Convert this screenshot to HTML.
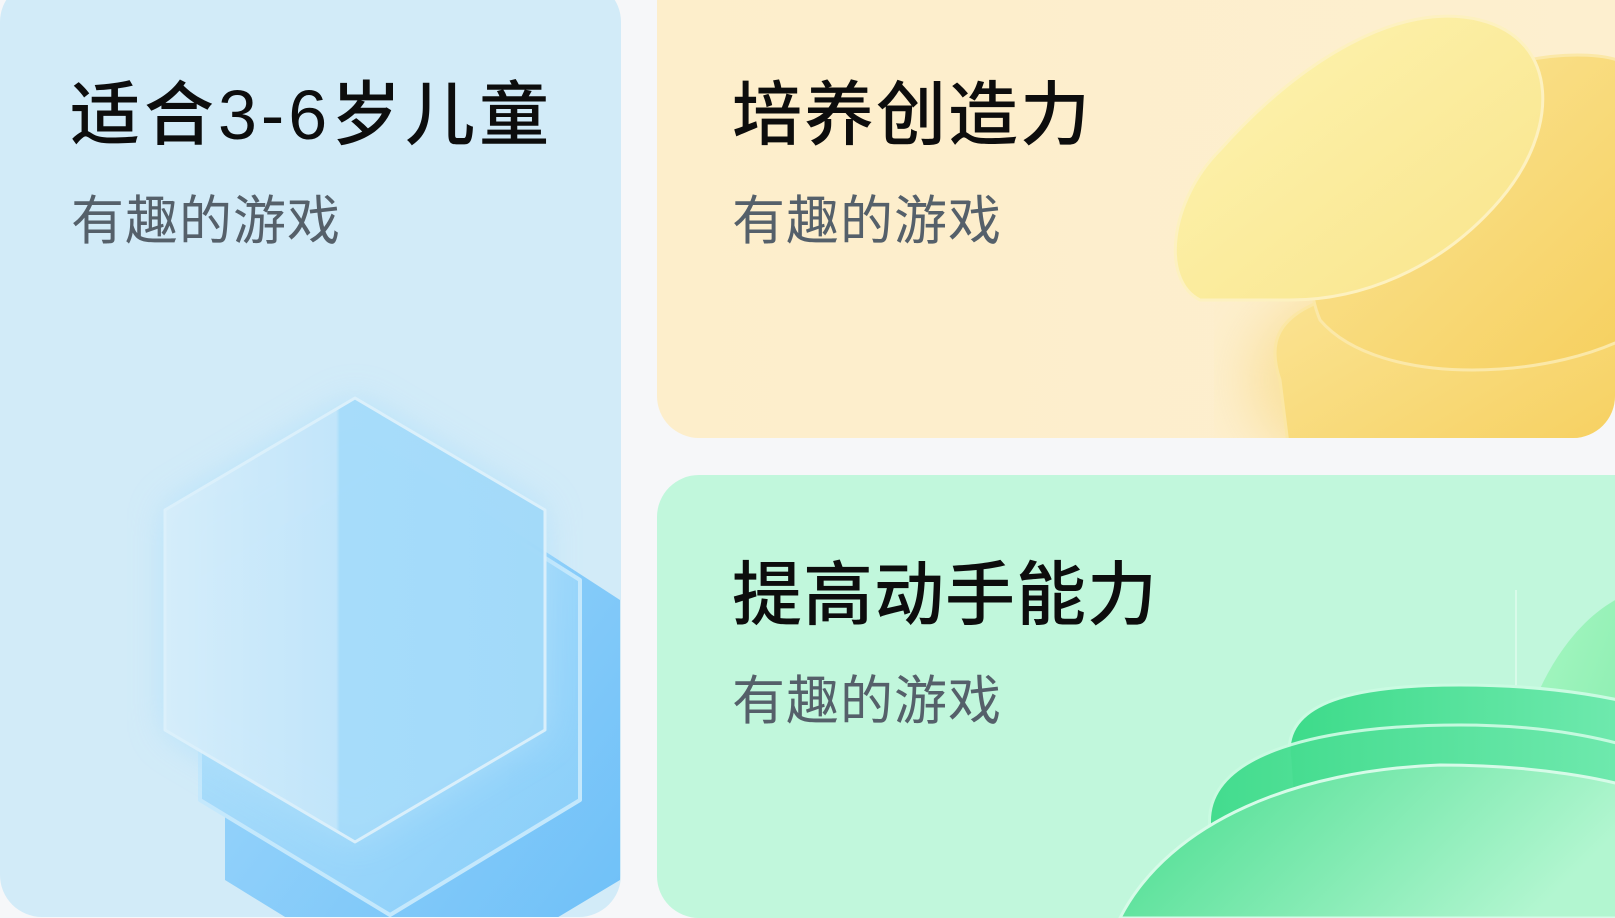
<!DOCTYPE html>
<html><head><meta charset="utf-8"><style>
html,body{margin:0;padding:0;overflow:hidden;width:1615px;height:918px;}
body{background:#f6f7f9;position:relative;font-family:"Liberation Sans","Noto Sans CJK SC",sans-serif;}
.card{position:absolute;border-radius:42px;overflow:hidden;}
.t{position:absolute;font-size:70px;font-weight:500;color:#0d0d0d;white-space:nowrap;line-height:1;letter-spacing:1px;}
.s{position:absolute;font-size:53px;color:#55606a;white-space:nowrap;line-height:1;letter-spacing:1px;}
svg{position:absolute;left:0;top:0;display:block;}
</style></head><body>
<div class="card" style="left:0;top:-20px;width:621px;height:937px;background:#d2ebf8;">
<svg width="621" height="937" viewBox="0 -20 621 937">
<defs>
<linearGradient id="hb" x1="0" y1="0" x2="1" y2="1"><stop offset="0" stop-color="#9fd8fb"/><stop offset="1" stop-color="#5fb9f8"/></linearGradient>
<linearGradient id="hm" x1="0" y1="0" x2="1" y2="1"><stop offset="0" stop-color="#b8e3fb"/><stop offset="1" stop-color="#86cdf9"/></linearGradient>
<linearGradient id="hf" x1="0" y1="0" x2="1" y2="0"><stop offset="0" stop-color="#d6eefb"/><stop offset="0.45" stop-color="#c3e6fb"/><stop offset="0.46" stop-color="#a6dcfb"/><stop offset="1" stop-color="#a2daf9"/></linearGradient>
<filter id="bl"><feGaussianBlur stdDeviation="18"/></filter>
</defs>
<path d="M420 470 L620 600 L620 880 L420 1000 L225 880 L225 600 Z" fill="url(#hb)" opacity="0.9"/>
<path d="M390 460 L580 580 L580 800 L390 915 L200 800 L200 580 Z" fill="url(#hm)" stroke="#c4e8fc" stroke-width="4" stroke-linejoin="round"/>
<path d="M355 398 L545 510 L545 730 L355 842 L165 730 L165 510 Z" fill="#b0e0fb" filter="url(#bl)" opacity="0.8"/>
<path d="M355 398 L545 510 L545 730 L355 842 L165 730 L165 510 Z" fill="url(#hf)" stroke="#ddf1fc" stroke-width="3" stroke-linejoin="round" opacity="0.95"/>
</svg>
</div>
<div class="t" style="left:70px;top:80px;letter-spacing:4px;">适合3-6岁儿童</div>
<div class="s" style="left:71px;top:195px;">有趣的游戏</div>

<div class="card" style="left:657px;top:-40px;width:958px;height:478px;background:linear-gradient(90deg,#fdeecb,#fdefcf);">
<svg width="958" height="478" viewBox="657 -40 958 478">
<defs>
<linearGradient id="y1" x1="0" y1="0" x2="1" y2="1"><stop offset="0" stop-color="#fbe69a"/><stop offset="1" stop-color="#f6cf5d"/></linearGradient>
<linearGradient id="y2" x1="0" y1="0" x2="1" y2="1"><stop offset="0" stop-color="#fdf4b2"/><stop offset="1" stop-color="#f9e48a"/></linearGradient>
<filter id="b2"><feGaussianBlur stdDeviation="30"/></filter>
</defs>
<ellipse cx="1430" cy="380" rx="180" ry="110" fill="#f7d77a" filter="url(#b2)" opacity="0.6"/>
<path d="M1280 380 C1260 320 1300 300 1400 280 L1640 240 L1640 460 L1290 460 Z" fill="url(#y1)" stroke="#fbe7a5" stroke-width="3"/>
<path d="M1320 320 C1290 250 1340 150 1440 90 C1540 40 1640 50 1640 80 L1640 330 C1560 380 1380 390 1320 320 Z" fill="url(#y1)" stroke="#fbe8a8" stroke-width="3"/>
<path d="M1200 300 C1160 280 1170 200 1220 150 C1300 60 1400 0 1480 20 C1560 40 1560 130 1500 200 C1440 270 1360 300 1290 300 Z" fill="url(#y2)" stroke="#fdf1c0" stroke-width="3"/>
</svg>
</div>
<div class="t" style="left:732px;top:80px;letter-spacing:2px;">培养创造力</div>
<div class="s" style="left:732px;top:195px;">有趣的游戏</div>

<div class="card" style="left:657px;top:475px;width:1000px;height:443px;background:#c1f7dc;">
<svg width="1000" height="443" viewBox="657 475 1000 443">
<defs>
<linearGradient id="g1" x1="0" y1="0" x2="1" y2="1"><stop offset="0" stop-color="#a9f8c4"/><stop offset="1" stop-color="#7fe9a8"/></linearGradient>
<linearGradient id="g2" x1="0" y1="0" x2="1" y2="0"><stop offset="0" stop-color="#3ddb8a"/><stop offset="1" stop-color="#72eab0"/></linearGradient>
<linearGradient id="g3" x1="0" y1="0" x2="1" y2="0.3"><stop offset="0" stop-color="#45dc8d"/><stop offset="1" stop-color="#b2f6d0"/></linearGradient>
</defs>
<line x1="1516" y1="590" x2="1516" y2="900" stroke="#d8fbe9" stroke-width="2"/>
<path d="M1535 700 C1560 640 1600 600 1640 590 L1640 900 L1520 900 Z" fill="url(#g1)"/>
<path d="M1290 760 C1280 700 1360 685 1460 685 C1540 685 1600 695 1640 705 L1640 918 L1300 918 Z" fill="url(#g2)" stroke="#cafbe2" stroke-width="3"/>
<path d="M1210 830 C1200 750 1330 725 1460 725 C1550 725 1610 740 1640 750 L1640 918 L1220 918 Z" fill="url(#g2)" stroke="#cafbe2" stroke-width="3" opacity="0.95"/>
<path d="M1120 918 C1170 820 1300 770 1440 765 C1540 765 1610 780 1640 790 L1640 918 Z" fill="url(#g3)" stroke="#d6fbe8" stroke-width="3"/>
</svg>
</div>
<div class="t" style="left:732px;top:560px;">提高动手能力</div>
<div class="s" style="left:732px;top:675px;">有趣的游戏</div>
</body></html>
